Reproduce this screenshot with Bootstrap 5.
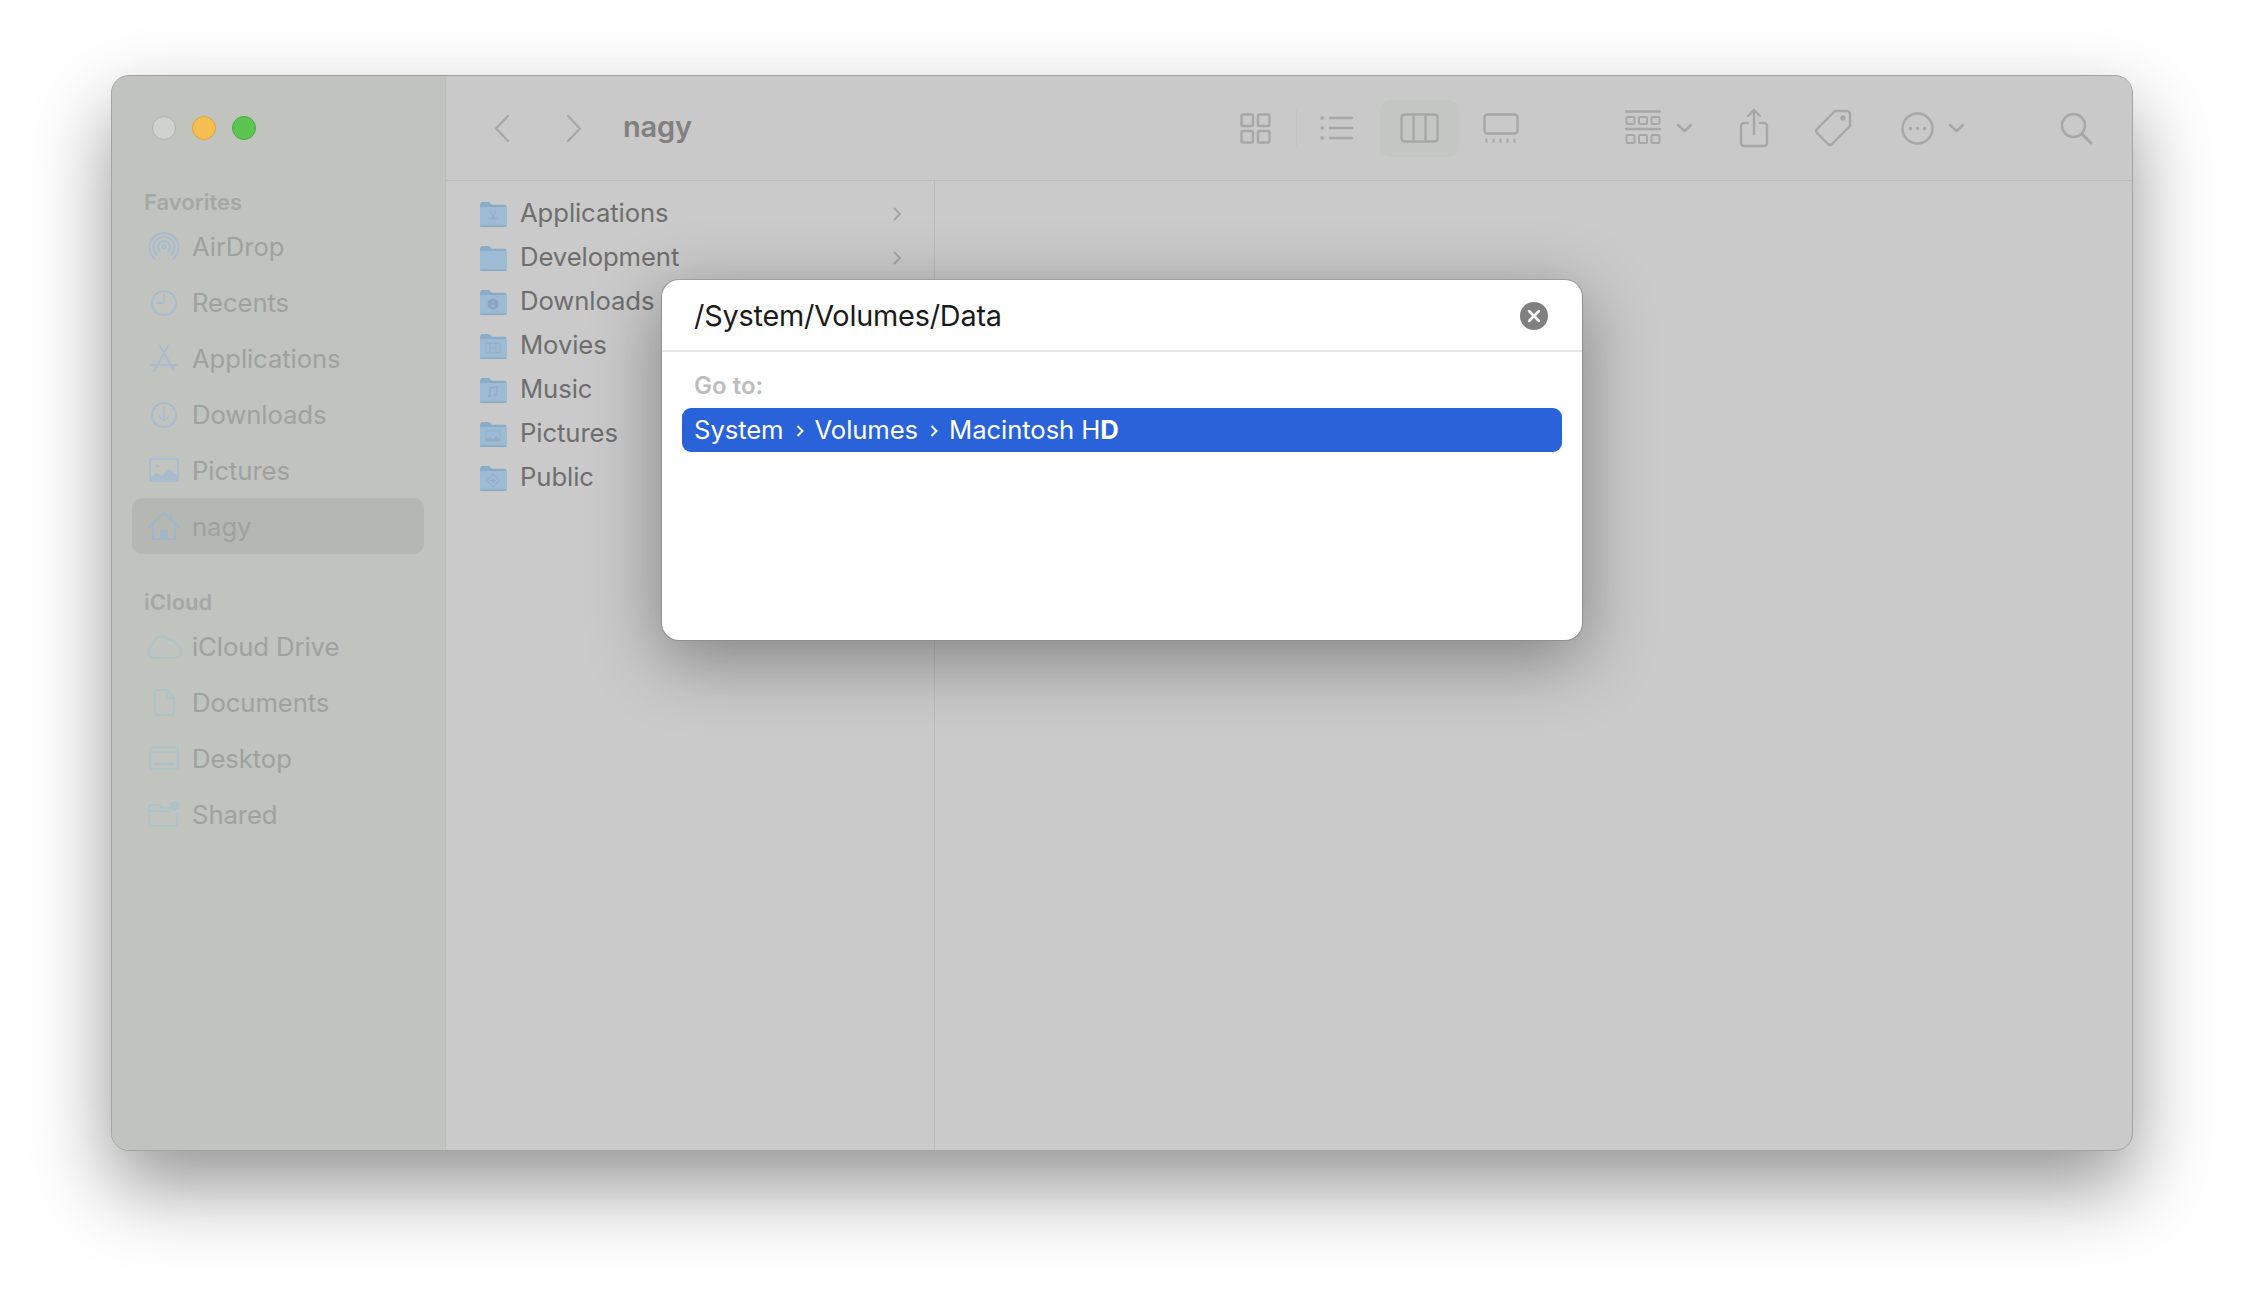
<!DOCTYPE html>
<html lang="en">
<head>
<meta charset="utf-8">
<title>Finder Go to folder</title>
<link href="https://cdn.jsdelivr.net/npm/bootstrap@5.3.0/dist/css/bootstrap.min.css" rel="stylesheet">
<style>
html,body{height:100%;}
body{background:#fff;font-family:Inter,"Noto Sans","Liberation Sans",sans-serif;overflow:hidden;}
.fw-window{width:2022px;height:1076px;margin:75px auto 0;position:relative;border-radius:18px;border:1px solid #a3a3a1;background:#cacaca;box-shadow:0 36px 80px rgba(0,0,0,.42);overflow:hidden;}
.fw-side{width:334px;background:#c1c3bf;padding:40px 21px 0 20px;border-right:1px solid #bcbdba;flex:none;}
.fw-lights{gap:16px;padding-left:20px;margin-bottom:47px;height:24px;}
.fw-light{width:24px;height:24px;border-radius:50%;border:1px solid;}
.fw-l1{background:#cfd3cf;border-color:#aeb0ad;}
.fw-l2{background:#f5bf4f;border-color:#d9a63f;}
.fw-l3{background:#5bc64f;border-color:#49a73f;}
.fw-label{font-size:22px;line-height:30px;font-weight:600;color:#a5a7a4;padding-left:12px;margin-bottom:1px;}
.fw-label2{margin-top:33px;}
.fw-item{height:56px;font-size:25.7px;color:#9fa19e;padding:2px 0 0 8px;border-radius:10px;letter-spacing:-.1px;}
.fw-item svg{width:48px;height:40px;flex:none;margin-right:4px;fill:none;stroke:#a9bccf;stroke-width:2;stroke-linecap:round;stroke-linejoin:round;}
.fw-item.fw-icl svg{stroke:#aec3c5;}
.fw-active{background:#b5b7b3;}
.fw-item.fw-active svg{stroke:#a0b5c8;}
.fw-main{min-width:0;}
.fw-bar{height:105px;background:#c9c9c9;border-bottom:1px solid #bbb;padding:0 39px 0 47px;flex:none;}
.fw-bar svg{fill:none;stroke:#a7a7a7;stroke-width:2.4;flex:none;stroke-linecap:round;stroke-linejoin:round;}
.fw-title{font-size:29px;font-weight:600;color:#808080;letter-spacing:-.2px;position:relative;bottom:1px;}
.fw-col{width:489px;border-right:1px solid #bbb;padding:10.5px 0 0 33px;flex:none;}
.fw-row{height:44px;font-size:25.7px;color:#6e6e6e;letter-spacing:-.1px;position:relative;}
.fw-row>svg.fw-folder{width:28px;height:28px;margin-right:13px;flex:none;}
.fw-chev{width:10px;height:16px;fill:none;stroke:#a3a3a3;stroke-width:1.8;position:absolute;left:413px;}
.m1{margin-left:56px}.m2{margin-left:41px}.m3{margin-left:25px}.m4{margin-left:23px}.m5{margin-left:27px}.m6{margin-left:24px}.m7{margin-left:106px}.m8{margin-left:15px}.m9{margin-left:46px}.m10{margin-left:45px}.m11{margin-left:49px}.m12{margin-left:14px}.m13{margin-left:95px}
.fw-sep{width:1px;height:36px;background:#c2c2c2;flex:none;}
.fw-sel{width:79px;height:57px;border-radius:10px;background:#c3c6c2;flex:none;}
.fw-dialog{position:absolute;left:549px;top:203px;width:922px;height:362px;background:#fff;border-radius:18px;border:1px solid #8f8f8f;border-top-color:#9d9d9d;box-shadow:0 18px 70px rgba(0,0,0,.36);}
.fw-input{height:72px;border-bottom:2px solid #e6e6e6;padding:1px 34px 0 32px;font-size:28.8px;color:#1b1b1b;letter-spacing:-.2px;}
.fw-close{width:28px;height:28px;flex:none;}
.fw-goto{font-size:24px;font-weight:600;color:#bdbdbd;padding-left:32px;margin-top:19px;line-height:30px;}
.fw-hit{height:44px;margin:7px 20px 0;background:#2962d9;border-radius:9px;color:#fff;font-size:25.7px;padding:1px 0 0 12px;letter-spacing:-.1px;}
.fw-hit svg{width:8px;height:14px;fill:none;stroke:#fff;stroke-width:2;margin:0 11px 0 12px;flex:none;}
.fw-hit b{font-weight:700;}
</style>
</head>
<body>
<svg width="0" height="0" class="position-absolute">
<symbol id="folder" viewBox="0 0 28 28">
<path d="M1 5.500Q1 2 3.500 2h6q1.400 0 2.400 1.500l.8 1.200H26q1.500 0 1.500 1.500V10H1z" fill="#8bacc9"/>
<path d="M1 7h26q1 0 1 1v17q0 2-2 2H2.500Q1 27 1 25z" fill="#9dbbd4"/>
<path d="M1 25.500h27V25q0 2-2 2H2.500Q1 27 1 25.500z" fill="#88a7c0"/>
</symbol>
</svg>
<div class="fw-window d-flex">
  <aside class="fw-side">
    <div class="fw-lights d-flex">
      <span class="fw-light fw-l1"></span><span class="fw-light fw-l2"></span><span class="fw-light fw-l3"></span>
    </div>
    <div class="fw-label">Favorites</div>
    <div class="fw-item d-flex align-items-center"><svg viewBox="0 0 48 40"><circle cx="24" cy="20" r="1.800"/><path d="M20 24.500a6 6 0 1 1 8 0M17 28a10.500 10.500 0 1 1 14 0M14.500 31.500a14.500 14.500 0 1 1 19 0"/></svg>AirDrop</div>
    <div class="fw-item d-flex align-items-center"><svg viewBox="0 0 48 40"><circle cx="24" cy="20" r="12"/><path d="M24 11v9h-7" stroke-width="1.500"/></svg>Recents</div>
    <div class="fw-item d-flex align-items-center"><svg viewBox="0 0 48 40"><path d="M20 7l12 21M28 7L15 30M11 26h26M32 28l2 3M15 30l-1 2"/></svg>Applications</div>
    <div class="fw-item d-flex align-items-center"><svg viewBox="0 0 48 40"><circle cx="24" cy="20" r="12"/><path d="M24 12v14M19 21l5 5 5-5" stroke-width="1.500"/></svg>Downloads</div>
    <div class="fw-item d-flex align-items-center"><svg viewBox="0 0 48 40"><rect x="10" y="8" width="28" height="22" rx="2"/><path d="M10 28l7-5 5 3 7-7 9 7v4H10z" fill="#a9bccf"/><path d="M16 13l4 2-4 2z" fill="#a9bccf" stroke="none"/></svg>Pictures</div>
    <div class="fw-item fw-active d-flex align-items-center"><svg viewBox="0 0 48 40"><path d="M9 20L24 6l15 14M13 17v15h22V17"/><path d="M31 7v6"/><rect x="20" y="23" width="8" height="9" fill="#a0b5c8" stroke="none"/></svg>nagy</div>
    <div class="fw-label fw-label2">iCloud</div>
    <div class="fw-item fw-icl d-flex align-items-center"><svg viewBox="0 0 48 40"><path d="M15 31a6.500 6.500 0 0 1-2-12.700A9 9 0 0 1 29 13a7 7 0 0 1 8 5.500A6.500 6.500 0 0 1 34 31z"/></svg>iCloud Drive</div>
    <div class="fw-item fw-icl d-flex align-items-center"><svg viewBox="0 0 48 40"><path d="M17 7h10l7 8v15a2 2 0 0 1-2 2H17a2 2 0 0 1-2-2V9a2 2 0 0 1 2-2zM27 7v8h7"/></svg>Documents</div>
    <div class="fw-item fw-icl d-flex align-items-center"><svg viewBox="0 0 48 40"><rect x="10" y="8" width="28" height="22" rx="2"/><path d="M10 13h28"/><path d="M15 25h18" stroke-width="3"/></svg>Desktop</div>
    <div class="fw-item fw-icl d-flex align-items-center"><svg viewBox="0 0 48 40"><path d="M9 12a2 2 0 0 1 2-2h8l3 3h10M9 16h20M9 12v17a2 2 0 0 0 2 2h24a2 2 0 0 0 2-2V18"/><circle cx="35" cy="11" r="5" fill="#aec3c5" stroke="none"/></svg>Shared</div>
  </aside>
  <main class="fw-main flex-grow-1 d-flex flex-column">
    <header class="fw-bar d-flex align-items-center">
      <svg width="17" height="29" viewBox="0 0 17 29"><path d="M15 2L3 14.500 15 27"/></svg>
      <svg class="m1" width="16" height="29" viewBox="0 0 16 29"><path d="M2 2l12 12.500L2 27"/></svg>
      <span class="fw-title m2">nagy</span>
      <span class="flex-grow-1"></span>
      <svg width="31" height="31" viewBox="0 0 31 31"><rect x="1.500" y="1.500" width="11.500" height="11.500" rx="1.500"/><rect x="18" y="1.500" width="11.500" height="11.500" rx="1.500"/><rect x="1.500" y="18" width="11.500" height="11.500" rx="1.500"/><rect x="18" y="18" width="11.500" height="11.500" rx="1.500"/></svg>
      <span class="fw-sep m3"></span>
      <svg class="m4" width="33" height="28" viewBox="0 0 33 28"><path d="M10 4h22M10 14h22M10 24h22"/><path d="M2 4h.5M2 14h.5M2 24h.5" stroke-width="3.500"/></svg>
      <span class="fw-sel m5 d-flex align-items-center justify-content-center"><svg width="39" height="30" viewBox="0 0 39 30"><rect x="1.500" y="1.500" width="36" height="27" rx="3"/><path d="M13.500 1.500v27M25.500 1.500v27"/></svg></span>
      <svg class="m6" width="36" height="30" viewBox="0 0 36 30"><rect x="1.500" y="1.500" width="33" height="19" rx="3"/><path d="M2.500 27.500h2M9.500 27.500h2M16.500 27.500h2M23.500 27.500h2M30.500 27.500h2" stroke-width="4" stroke-linecap="butt"/></svg>
      <svg class="m7" width="36" height="36" viewBox="0 0 36 36"><path d="M1 1.500h34M1 19h34"/><rect x="1.500" y="7" width="8" height="7" rx="1" stroke-width="2"/><rect x="14" y="7" width="8" height="7" rx="1" stroke-width="2"/><rect x="26.500" y="7" width="8" height="7" rx="1" stroke-width="2"/><rect x="1.500" y="25" width="8" height="8" rx="1" stroke-width="2"/><rect x="14" y="25" width="8" height="8" rx="1" stroke-width="2"/><rect x="26.500" y="25" width="8" height="8" rx="1" stroke-width="2"/></svg>
      <svg class="m8" width="17" height="10" viewBox="0 0 17 10"><path d="M2 2l6.500 6L15 2"/></svg>
      <svg class="m9" width="30" height="40" viewBox="0 0 30 40"><path d="M9 15H5a3 3 0 0 0-3 3v17a3 3 0 0 0 3 3h20a3 3 0 0 0 3-3V18a3 3 0 0 0-3-3h-4M15 26V2M9 8l6-6 6 6"/></svg>
      <svg class="m10" width="38" height="38" viewBox="0 0 38 38"><path d="M21 2h12a3 3 0 0 1 3 3v12L18 35a3 3 0 0 1-4 0L3 24a3 3 0 0 1 0-4z"/><circle cx="29" cy="9" r="1.500" fill="#a7a7a7"/></svg>
      <svg class="m11" width="33" height="33" viewBox="0 0 33 33"><circle cx="16.500" cy="16.500" r="15"/><path d="M9.500 16.500h.1M16.500 16.500h.1M23.500 16.500h.1" stroke-width="3.500"/></svg>
      <svg class="m12" width="17" height="10" viewBox="0 0 17 10"><path d="M2 2l6.500 6L15 2"/></svg>
      <svg class="m13" width="33" height="33" viewBox="0 0 33 33"><circle cx="13.500" cy="13.500" r="11.500"/><path d="M22 22l9 9" stroke-width="3"/></svg>
    </header>
    <div class="flex-grow-1 d-flex">
      <section class="fw-col">
        <div class="fw-row d-flex align-items-center"><svg class="fw-folder"><use href="#folder"/><path d="M12 20l5-9M16 20l-5-9M9 18h10" stroke="#8fafc9" stroke-width="1" fill="none"/></svg>Applications<svg class="fw-chev" viewBox="0 0 10 16"><path d="M2 2l6 6-6 6"/></svg></div>
        <div class="fw-row d-flex align-items-center"><svg class="fw-folder"><use href="#folder"/></svg>Development<svg class="fw-chev" viewBox="0 0 10 16"><path d="M2 2l6 6-6 6"/></svg></div>
        <div class="fw-row d-flex align-items-center"><svg class="fw-folder"><use href="#folder"/><circle cx="14" cy="16" r="5.500" fill="#86a6c1"/><path d="M14 13v6M12 17l2 2 2-2" stroke="#9dbbd4" stroke-width="1" fill="none"/></svg>Downloads</div>
        <div class="fw-row d-flex align-items-center"><svg class="fw-folder"><use href="#folder"/><path d="M7 11h14v10H7zM11 11v10M17 11v10M11 16h6" stroke="#8fafc9" stroke-width="1" fill="none"/></svg>Movies</div>
        <div class="fw-row d-flex align-items-center"><svg class="fw-folder"><use href="#folder"/><path d="M11 20v-8l7-1.500v8" stroke="#8fafc9" stroke-width="1.500" fill="none"/><circle cx="10" cy="20" r="1.500" fill="#8fafc9"/><circle cx="17" cy="19" r="1.500" fill="#8fafc9"/></svg>Music</div>
        <div class="fw-row d-flex align-items-center"><svg class="fw-folder"><use href="#folder"/><rect x="7" y="11" width="14" height="10" fill="none" stroke="#8fafc9" stroke-width="1"/><path d="M7 20l4-3 3 2 3-3 4 3v2H7z" fill="#8fafc9"/></svg>Pictures</div>
        <div class="fw-row d-flex align-items-center"><svg class="fw-folder"><use href="#folder"/><path d="M14 10l6.500 6.500L14 23l-6.500-6.500z" fill="none" stroke="#8fafc9" stroke-width="1"/><path d="M14 14v5M11.500 16.500h5" stroke="#8fafc9" stroke-width="1"/></svg>Public</div>
      </section>
      <section class="flex-grow-1"></section>
    </div>
  </main>
  <div class="fw-dialog">
    <div class="fw-input d-flex align-items-center justify-content-between">
      <span>/System/Volumes/Data</span>
      <svg class="fw-close" viewBox="0 0 28 28"><circle cx="14" cy="14" r="14" fill="#808080"/><path d="M9 9l10 10M19 9L9 19" stroke="#fff" stroke-width="2.500" stroke-linecap="round"/></svg>
    </div>
    <div class="fw-goto">Go to:</div>
    <div class="fw-hit d-flex align-items-center">System<svg viewBox="0 0 8 14"><path d="M1.500 2l5 5-5 5"/></svg>Volumes<svg viewBox="0 0 8 14"><path d="M1.500 2l5 5-5 5"/></svg><span>Macintosh H<b>D</b></span></div>
  </div>
</div>
<script src="https://cdn.jsdelivr.net/npm/bootstrap@5.3.0/dist/js/bootstrap.bundle.min.js"></script>
</body>
</html>
